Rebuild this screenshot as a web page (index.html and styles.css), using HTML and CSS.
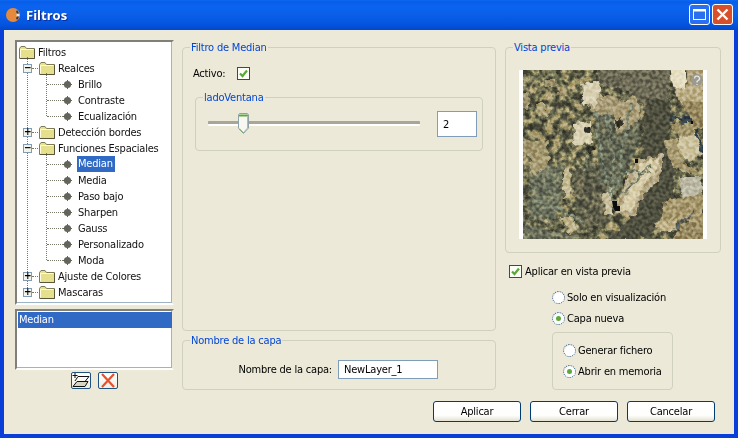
FILE: index.html
```
<!DOCTYPE html>
<html lang="es">
<head>
<meta charset="utf-8">
<title>Filtros</title>
<link rel="stylesheet" href="styles.css">
</head>
<body>
<svg class="defs" width="0" height="0" aria-hidden="true">
  <defs>
    <symbol id="folder" viewBox="0 0 16 13">
      <path d="M.5 12.500V2.500L2 .5H6L7.500 2.500H15.500V12.500Z" fill="#e6e08c" stroke="#7d7a58"/>
      <path d="M1.500 11.500V3.500H14.500" fill="none" stroke="#fffde0"/>
      <path d="M15.500 3V12.500H1" fill="none" stroke="#57553c"/>
    </symbol>
    <symbol id="bullet" viewBox="0 0 9 9">
      <circle cx="4.500" cy="4.500" r="3.600" fill="#63645a"/>
      <path d="M4.500 0V9M0 4.500H9" stroke="#63645a"/>
    </symbol>
  </defs>
</svg>
<div class="window">
  <header class="titlebar">
    <svg class="app-icon" width="18" height="18" viewBox="0 0 18 18">
      <circle cx="8" cy="9" r="7" fill="#e58a3c"/>
      <path d="M12 4A7 7 0 0 1 12 14L11 12A4 4 0 0 0 11 6Z" fill="#123b6e"/>
      <circle cx="13" cy="9" r="1.600" fill="#dfe8f5"/>
    </svg>
    <span class="title">Filtros</span>
    <span class="win-btn win-max">
      <svg width="21" height="21" viewBox="0 0 21 21"><rect x="4.500" y="5.500" width="12" height="10" fill="none" stroke="#fff"/><path d="M4 6.500H17" stroke="#fff" stroke-width="2"/></svg>
    </span>
    <span class="win-btn win-close">
      <svg width="21" height="21" viewBox="0 0 21 21"><path d="M5.500 5.500L15.500 15.500M15.500 5.500L5.500 15.500" stroke="#fff" stroke-width="2.400"/></svg>
    </span>
  </header>

  <main class="body">
    <div class="columns">
      <section class="col-left">
        <div class="tree sunken">
          <div class="row root"><svg class="folder"><use href="#folder"/></svg><span>Filtros</span></div>
          <ul class="level1">
            <li>
              <div class="row"><i class="exp">−</i><svg class="folder"><use href="#folder"/></svg><span>Realces</span></div>
              <ul class="level2">
                <li class="row"><svg class="bullet"><use href="#bullet"/></svg><span>Brillo</span></li>
                <li class="row"><svg class="bullet"><use href="#bullet"/></svg><span>Contraste</span></li>
                <li class="row"><svg class="bullet"><use href="#bullet"/></svg><span>Ecualización</span></li>
              </ul>
            </li>
            <li><div class="row"><i class="exp">+</i><svg class="folder"><use href="#folder"/></svg><span>Detección bordes</span></div></li>
            <li>
              <div class="row"><i class="exp">−</i><svg class="folder"><use href="#folder"/></svg><span>Funciones Espaciales</span></div>
              <ul class="level2">
                <li class="row"><svg class="bullet"><use href="#bullet"/></svg><span class="selected">Median</span></li>
                <li class="row"><svg class="bullet"><use href="#bullet"/></svg><span>Media</span></li>
                <li class="row"><svg class="bullet"><use href="#bullet"/></svg><span>Paso bajo</span></li>
                <li class="row"><svg class="bullet"><use href="#bullet"/></svg><span>Sharpen</span></li>
                <li class="row"><svg class="bullet"><use href="#bullet"/></svg><span>Gauss</span></li>
                <li class="row"><svg class="bullet"><use href="#bullet"/></svg><span>Personalizado</span></li>
                <li class="row"><svg class="bullet"><use href="#bullet"/></svg><span>Moda</span></li>
              </ul>
            </li>
            <li><div class="row"><i class="exp">+</i><svg class="folder"><use href="#folder"/></svg><span>Ajuste de Colores</span></div></li>
            <li><div class="row"><i class="exp">+</i><svg class="folder"><use href="#folder"/></svg><span>Mascaras</span></div></li>
          </ul>
        </div>
        <div class="list sunken"><div class="list-item">Median</div></div>
        <div class="tools">
          <button class="tool" type="button" aria-label="Añadir">
            <svg width="18" height="15" viewBox="0 0 18 15">
              <path d="M5 8.500H16L13 13.500H1Z" fill="#d5d6c4" stroke="#111"/>
              <path d="M6 3.500H17L13 8.500" fill="none" stroke="#111"/>
              <path d="M6 3.500L3 8" fill="none" stroke="#111"/>
              <path d="M3 0V5M.5 2.500H5.500" stroke="#111"/>
            </svg>
          </button>
          <button class="tool" type="button" aria-label="Eliminar">
            <svg width="18" height="15" viewBox="0 0 18 15"><path d="M3 1L15 14M15 1L3 14" stroke="#e8502e" stroke-width="2.200"/></svg>
          </button>
        </div>
      </section>

      <section class="col-mid">
        <div class="group group-filter">
          <span class="legend">Filtro de Median</span>
          <div class="active-row"><span>Activo:</span><i class="check"><svg width="11" height="11" viewBox="0 0 11 11"><path d="M2 5.500L4.500 8L9 2.500" fill="none" stroke="#5ba83a" stroke-width="2.200"/></svg></i></div>
          <div class="group group-slider">
            <span class="legend">ladoVentana</span>
            <div class="slider">
              <div class="track"></div>
              <svg class="thumb" width="11" height="21" viewBox="0 0 11 21">
                <path d="M.5 1.500L1.500 .5H9.500L10.500 1.500V15L5.500 20.500L.5 15Z" fill="#f8f8f2" stroke="#8fa2a8"/>
                <path d="M1 1.500H10V3.500H1Z" fill="#5fa83c"/>
                <path d="M9.500 4V15L5.500 19.500" fill="none" stroke="#b8b8a8"/>
                <path d="M1.500 16L5.500 20" fill="none" stroke="#5fa83c"/>
              </svg>
            </div>
            <input class="field field-num" type="text" value="2" aria-label="ladoVentana">
          </div>
        </div>
        <div class="group group-name">
          <span class="legend">Nombre de la capa</span>
          <label class="name-label" for="capa">Nombre de la capa:</label>
          <input id="capa" class="field field-name" type="text" value="NewLayer_1">
        </div>
      </section>

      <section class="col-right">
        <div class="group group-preview">
          <span class="legend">Vista previa</span>
          <div class="preview">
            <svg width="180" height="169" viewBox="0 0 180 169">
              <defs>
                <filter id="base" x="0" y="0" width="100%" height="100%" color-interpolation-filters="sRGB">
                  <feTurbulence type="fractalNoise" baseFrequency="0.13" numOctaves="3" seed="9"/>
                  <feColorMatrix values="2.600 0 0 0 -.8  2.600 0 0 0 -.8  2.600 0 0 0 -.8  0 0 0 0 1"/>
                  <feComponentTransfer>
                    <feFuncR type="discrete" tableValues=".25 .31 .36 .41 .46 .52 .6 .7"/>
                    <feFuncG type="discrete" tableValues=".25 .31 .36 .41 .46 .51 .57 .64"/>
                    <feFuncB type="discrete" tableValues=".2 .24 .27 .31 .35 .36 .4 .46"/>
                  </feComponentTransfer>
                </filter>
                <filter id="rough" x="0" y="0" width="100%" height="100%" color-interpolation-filters="sRGB">
                  <feTurbulence type="fractalNoise" baseFrequency="0.14" numOctaves="2" seed="4" result="n"/>
                  <feDisplacementMap in="SourceGraphic" in2="n" scale="9" xChannelSelector="R" yChannelSelector="G"/>
                </filter>
                <filter id="tex" x="0" y="0" width="100%" height="100%" color-interpolation-filters="sRGB">
                  <feTurbulence type="fractalNoise" baseFrequency="0.3" numOctaves="1" seed="21"/>
                  <feColorMatrix values="3 0 0 0 -1  3 0 0 0 -1  3 0 0 0 -1  0 0 0 0 1"/>
                  <feComponentTransfer>
                    <feFuncR type="discrete" tableValues=".38 .44 .49 .52 .57 .63"/>
                    <feFuncG type="discrete" tableValues=".38 .44 .49 .52 .57 .63"/>
                    <feFuncB type="discrete" tableValues=".38 .44 .49 .52 .57 .63"/>
                  </feComponentTransfer>
                </filter>
              </defs>
              <rect width="180" height="169" filter="url(#base)"/>
              <g filter="url(#rough)">
                <path d="M70 -4H146V28L123 40L110 24L78 14Z" fill="#6c6955"/>
                <path d="M123 28L147 30L146 75L152 100L150 130L125 169H86L112 144L118 104Z" fill="#4f4f40"/>
                <path d="M8 88L40 98L34 150L6 150Z" fill="#6e7564" opacity=".7"/>
                <path d="M48 100L84 90L90 150L56 160Z" fill="#58594a" opacity=".6"/>
                <path d="M2 154L60 168L0 172Z" fill="#6e7363" opacity=".7"/>
                <path d="M72 40L116 30L118 70L96 120L76 112Z" fill="#5c6353" opacity=".7"/>
                <path d="M60 23L92 26L96 44L78 46L66 40Z" fill="#a89b76"/>
                <path d="M58 14L76 11L78 28L70 38L60 32Z" fill="#d8d0b2"/>
                <path d="M51 53L68 51L70 72L50 74Z" fill="#d8d1b2"/>
                <path d="M92 32L116 30L116 50L100 62L92 60Z" fill="#ab9e78"/>
                <path d="M13 33L22 33L24 48L14 46Z" fill="#ada178"/>
                <path d="M24 10L31 10L31 16L24 16ZM36 18L43 18L43 25L36 25Z" fill="#a0946f"/>
                <path d="M-4 23L6 23L6 38L-4 38Z" fill="#a0946f"/>
                <path d="M0 70L26 72L24 84L0 86Z" fill="#a0946c"/>
                <path d="M4 84L28 86L22 100L10 104Z" fill="#a69a72"/>
                <path d="M41 97L48 98L47 127L41 129Z" fill="#c2b890"/>
                <path d="M39 147L50 147L57 160L46 163Z" fill="#bdb188"/>
                <path d="M81 124L89 120L90 144L82 146Z" fill="#c9c09e"/>
                <path d="M145 -4H162V22L152 23Z" fill="#e6dec2"/>
                <path d="M162 -4H184V10L166 16Z" fill="#b0a37d"/>
                <path d="M150 20L180 12L184 32L160 34Z" fill="#baac84"/>
                <path d="M160 32L184 30V60L170 58Z" fill="#978860"/>
                <path d="M147 54L170 54L174 64L156 68Z" fill="#a2946a"/>
                <path d="M158 65L176 64L180 84L168 92L152 78Z" fill="#cbc19c"/>
                <path d="M140 70L154 70L160 92L176 104L150 98Z" fill="#a6986f"/>
                <path d="M112 90L140 84L140 104L120 128L112 146L92 144L100 120Z" fill="#b5a884"/>
                <path d="M118 94L136 88L134 98L114 126L108 142L96 140L104 124Z" fill="#d6cca8"/>
                <path d="M155 107L177 107L180 127L160 127Z" fill="#bcb9a5"/>
                <path d="M143 130L180 124V156L160 150L138 154Z" fill="#a5966c"/>
                <path d="M132 152L153 150L152 162L138 162Z" fill="#c0b288"/>
                <path d="M158 154L184 150V172H150Z" fill="#988a62"/>
                <g fill="none" stroke="#76806c" stroke-width="2.500">
                  <path d="M88 130L76 72L72 42"/>
                  <path d="M90 124L90 80L84 42"/>
                  <path d="M94 118L102 62L108 34"/>
                  <path d="M62 100L68 74"/>
                  <path d="M96 128L118 104L128 96"/>
                  <path d="M98 104L126 100"/>
                  <path d="M12 130L40 140L60 152"/>
                </g>
                <path d="M170 142L152 159" stroke="#5b6468" stroke-width="3"/>
                <path d="M146 48L170 50M172 60L180 82" stroke="#33414b" stroke-width="3"/>
                <g fill="#2e2e26">
                  <circle cx="66" cy="60" r="3"/>
                  <circle cx="68" cy="78" r="3.500"/>
                  <path d="M93 50L98 46L99 56L94 60Z"/>
                </g>
              </g>
              <rect class="tex" width="180" height="169" filter="url(#tex)"/>
              <g fill="#0c0c0c">
                <path d="M89 131H94V136H97V141H92L90 137Z"/>
                <rect x="112" y="89" width="3" height="4"/>
                <rect x="168" y="51" width="2" height="3"/>
              </g>
              <circle cx="174" cy="10" r="6" fill="#9b9a90"/>
              <path d="M171.500 8.500A2.500 2.300 0 1 1 175 10.500L174 11.500V12.500M174 14V15" fill="none" stroke="#e8e8e0" stroke-width="1.300"/>
            </svg>
          </div>
        </div>
        <div class="apply-row"><i class="check"><svg width="11" height="11" viewBox="0 0 11 11"><path d="M2 5.500L4.500 8L9 2.500" fill="none" stroke="#5ba83a" stroke-width="2.200"/></svg></i><span>Aplicar en vista previa</span></div>
        <div class="radio-block">
          <div class="radio-row"><i class="radio"></i><span>Solo en visualización</span></div>
          <div class="radio-row"><i class="radio on"></i><span>Capa nueva</span></div>
          <div class="group group-radios">
            <div class="radio-row"><i class="radio"></i><span>Generar fichero</span></div>
            <div class="radio-row"><i class="radio on"></i><span>Abrir en memoria</span></div>
          </div>
        </div>
      </section>
    </div>

    <footer class="actions">
      <button class="btn" type="button">Aplicar</button>
      <button class="btn" type="button">Cerrar</button>
      <button class="btn" type="button">Cancelar</button>
    </footer>
  </main>
</div>
</body>
</html>
```
FILE: styles.css
```
* { box-sizing: border-box; }
html, body { margin: 0; padding: 0; }
body {
  width: 738px;
  height: 438px;
  overflow: hidden;
  font-family: "DejaVu Sans Condensed", "DejaVu Sans", sans-serif;
  font-stretch: condensed;
  font-size: 11px;
  letter-spacing: -0.2px;
  color: #000;
  background: #0a3ed8;
}
.defs { display: block; height: 0; }
ul { list-style: none; margin: 0; padding: 0; }
i { font-style: normal; }

.window { width: 738px; height: 438px; display: flex; flex-direction: column; }

.titlebar {
  height: 30px;
  flex: none;
  display: flex;
  align-items: center;
  padding: 0 5px 1px 5px;
  background: linear-gradient(#0a6af0 0, #0a5ce8 2px, #0a64f0 6px, #0b5fe8 14px, #0455e0 24px, #0348c8 30px);
}
.app-icon { flex: none; }
.title {
  margin-left: 3px;
  flex: 1;
  color: #fff;
  font-family: "Open Sans", "DejaVu Sans", sans-serif;
  font-stretch: normal;
  letter-spacing: 0;
  font-weight: 700;
  font-size: 13px;
  text-shadow: 1px 1px 0 #0a2f9c;
}
.win-btn {
  width: 21px;
  height: 21px;
  flex: none;
  margin-left: 2px;
  border: 1px solid #fff;
  border-radius: 3px;
  display: flex;
  align-items: center;
  justify-content: center;
}
.win-btn svg { margin: -1px; flex: none; }
.win-max { background: #2a6ff0; }
.win-close { background: #d8502a; }

.body {
  flex: 1;
  min-height: 0;
  margin: 0 4px 4px 4px;
  background: #ece9d8;
  padding: 10px 13px 0 11px;
  display: flex;
  flex-direction: column;
}
.columns { display: flex; gap: 8px; height: 351px; flex: none; }

.sunken {
  background: #fff;
  border: 2px solid;
  border-color: #808078 #ece9d8 #fff #808078;
  box-shadow: inset -1px -1px 0 #9db4c8;
}

.col-left { width: 159px; flex: none; display: flex; flex-direction: column; gap: 4px; }
.tree { height: 265px; padding: 2px 0 0 2px; flex: none; position: relative; }
.row { height: 16px; display: flex; align-items: center; white-space: nowrap; color: #111; }
.folder { width: 16px; height: 13px; flex: none; margin-right: 3px; }
.level1 { position: relative; }
.level1::before {
  content: "";
  position: absolute;
  left: 8px;
  top: -3px;
  bottom: 8px;
  border-left: 1px dotted #77776a;
}
.level1 > li > .row { padding-left: 4px; }
.exp {
  position: relative;
  width: 9px;
  height: 9px;
  flex: none;
  margin-right: 7px;
  border: 1px solid #7f9db9;
  background: #f4f3ec;
  font-size: 10px;
  line-height: 6px;
  font-weight: 700;
  text-align: center;
  color: #000;
}
.exp::after {
  content: "";
  position: absolute;
  left: 8px;
  top: 3px;
  width: 6px;
  border-top: 1px dotted #77776a;
}
.level2 { position: relative; }
.level2::before {
  content: "";
  position: absolute;
  left: 27px;
  top: -3px;
  bottom: 8px;
  border-left: 1px dotted #77776a;
}
.level2 .row { padding-left: 44px; position: relative; }
.level2 .row::before {
  content: "";
  position: absolute;
  left: 28px;
  top: 8px;
  width: 16px;
  border-top: 1px dotted #77776a;
}
.bullet { width: 9px; height: 9px; flex: none; margin-right: 6px; }
.selected { background: #316ac5; color: #fff; padding: 0 2px 0 1px; margin-left: -1px; height: 16px; line-height: 15px; }

.list { height: 61px; padding: 1px 0 0 1px; flex: none; }
.list-item { background: #316ac5; color: #fff; height: 16px; line-height: 16px; width: 154px; padding-left: 1px; }
.tools { display: flex; justify-content: center; gap: 7px; margin-top: -2px; }
.tool {
  width: 20px;
  height: 17px;
  padding: 0;
  border: 1px solid #1c5180;
  border-radius: 2px;
  background: linear-gradient(#fff, #f0eee2);
  display: flex;
  align-items: center;
  justify-content: center;
}

.group { position: relative; border: 1px solid #d0d0bf; border-radius: 4px; }
.legend {
  position: absolute;
  left: 7px;
  top: -7px;
  height: 13px;
  line-height: 13px;
  padding: 0 1px;
  background: #ece9d8;
  color: #0046d5;
  white-space: nowrap;
}

.col-mid { width: 314px; flex: none; display: flex; flex-direction: column; gap: 9px; padding-top: 7px; }
.group-filter { height: 284px; padding: 15px 12px 0 10px; flex: none; }
.active-row { display: flex; align-items: center; height: 20px; gap: 11px; margin-bottom: 14px; }
.check {
  width: 13px;
  height: 13px;
  flex: none;
  border: 1px solid #1c5180;
  background: #fdfdf8;
  display: flex;
  align-items: center;
  justify-content: center;
}
.check svg { flex: none; }
.group-slider {
  height: 54px;
  margin-left: 2px;
  padding: 13px 5px 0 12px;
  display: flex;
  align-items: flex-start;
  justify-content: space-between;
}
.slider { position: relative; width: 212px; height: 26px; }
.track {
  position: absolute;
  left: 0;
  right: 0;
  top: 10px;
  height: 4px;
  background: #a8a698;
  border-bottom: 1px solid #fff;
  border-top: 1px solid #a8a698;
  border-radius: 1px;
  box-shadow: 0 1px 0 #fff;
}
.thumb { position: absolute; left: 30px; top: 2px; }
.field {
  font: inherit;
  letter-spacing: inherit;
  color: #000;
  background: #fff;
  border: 1px solid #7f9db9;
  outline: none;
  border-radius: 0;
  padding: 0 0 0 5px;
}
.field-num { width: 40px; height: 26px; }
.group-name {
  height: 50px;
  flex: none;
  display: flex;
  align-items: center;
  justify-content: flex-end;
  gap: 6px;
  padding: 8px 57px 0 0;
}
.field-name { width: 100px; height: 19px; }

.col-right { width: 216px; flex: none; padding-top: 7px; margin-left: 1px; }
.group-preview { height: 206px; padding: 22px 13px 0 13px; }
.preview { width: 188px; height: 169px; padding: 0 4px; background: #fff; }
.preview svg { display: block; }
.tex { mix-blend-mode: overlay; }
.apply-row { display: flex; align-items: center; gap: 3px; height: 16px; margin: 10px 0 0 4px; }
.radio-block { margin-left: 47px; margin-top: 8px; display: flex; flex-direction: column; }
.radio-row { display: flex; align-items: center; gap: 2px; height: 21px; }
.radio {
  width: 13px;
  height: 13px;
  flex: none;
  border-radius: 50%;
  border: 1px dotted #1c5180;
  background: radial-gradient(circle at 60% 60%, #fff 55%, #dcd8c4);
  display: flex;
  align-items: center;
  justify-content: center;
}
.radio.on::after { content: ""; width: 5px; height: 5px; border-radius: 50%; background: #5fa83c; }
.group-radios { width: 121px; height: 58px; margin-top: 3px; padding: 7px 0 0 10px; }

.actions { display: flex; justify-content: flex-end; gap: 9px; padding-right: 6px; padding-top: 10px; }
.btn {
  width: 88px;
  height: 21px;
  padding: 0;
  font: inherit;
  letter-spacing: inherit;
  color: #000;
  border: 1px solid #003c74;
  border-radius: 3px;
  background: linear-gradient(#fff 0, #fefefd 70%, #e4e1d2 100%);
}
```
